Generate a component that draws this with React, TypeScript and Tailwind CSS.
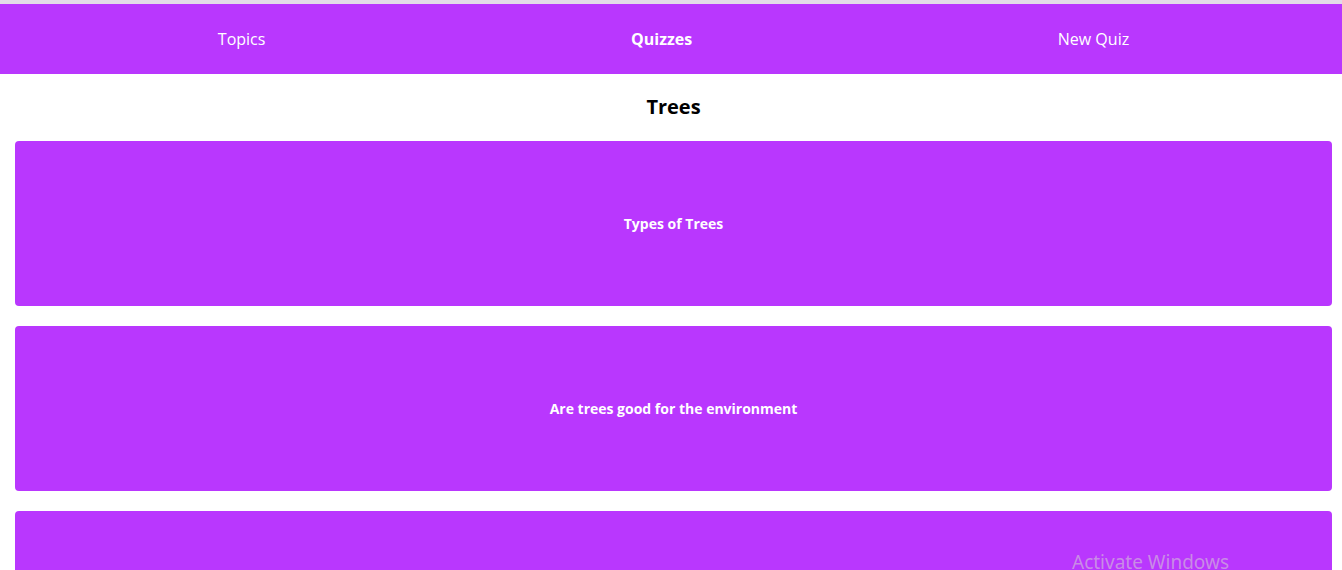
const quizzes = ["Types of Trees", "Are trees good for the environment", ""];

export default function App() {
  return (
    <div className="relative min-h-[570px] overflow-hidden bg-white font-['Open_Sans',sans-serif]">
      <div className="h-[4px] bg-[#e3dbe8]" />
      <nav className="flex h-[70px] items-center justify-around bg-[#b937fe] pl-[35px] pr-[30px] text-[16px] text-white">
        <a className="cursor-pointer">Topics</a>
        <a className="cursor-pointer font-bold">Quizzes</a>
        <a className="cursor-pointer">New Quiz</a>
      </nav>

      <main className="ml-[15px] mr-[10px]">
        <h1 className="pt-[16px] pb-[17px] text-center text-[20px] font-bold leading-[34px] text-black">
          Trees
        </h1>
        <div className="flex flex-col gap-[20px]">
          {quizzes.map((q, i) => (
            <div
              key={i}
              className="flex h-[165px] items-center justify-center rounded-[4px] bg-[#b937fe] text-[14px] font-bold text-white"
            >
              {q}
            </div>
          ))}
        </div>
      </main>

      <div className="absolute left-[1072px] top-[549px] font-['Noto_Sans',sans-serif] text-[19px] leading-[26px] text-[#c98be6]">
        Activate Windows
      </div>
    </div>
  );
}
